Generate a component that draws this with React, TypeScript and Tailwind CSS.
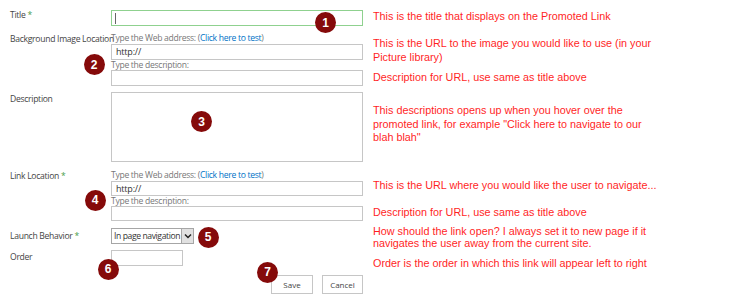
import React from 'react'

const label = "text-[8.6px] text-[#444] leading-[12px] tracking-[-0.3px]"
const hint = "text-[8.6px] text-[#777] tracking-[-0.3px]"
const box = "border border-[#c6c6c6] bg-white"
const note = "text-[10.8px] text-[#ff1f1f]"

function Marker({ n, x, y }: { n: number; x: number; y: number }) {
  // numbered callout dropped on top of the form
  return (
    <div
      className="absolute w-[21px] h-[21px] rounded-full bg-[#850a0a] text-white flex items-center justify-center text-[12px] font-bold"
      style={{ left: x - 10.5, top: y - 10.5, fontFamily: '"Liberation Sans", Arial, sans-serif' }}
    >
      {n}
    </div>
  )
}

function WebAddress() {
  return (
    <div className={`${hint} h-[11px] leading-[11px] whitespace-nowrap`}>
      Type the Web address: (<span className="text-[#0072c6]">Click here to test</span>)
    </div>
  )
}

export default function App() {
  return (
    <div className="relative w-[736px] h-[302px] bg-white overflow-hidden flex" style={{ fontFamily: '"Open Sans", "Noto Sans", sans-serif' }}>
      <div className="w-[373px] pl-[10px] pr-[10px] flex flex-col shrink-0">
        <div className="flex mt-[10px]">
          <div className={`w-[101px] ${label} mt-[-1px]`}>Title <span className="text-[#4a9d4a]">*</span></div>
          <div className="w-[252px] h-[16px] border border-[#8fd18f] flex items-center pl-[3px]">
            <div className="w-px h-[11px] bg-[#666]" />
          </div>
        </div>

        <div className="flex mt-[7px]">
          <div className={`w-[101px] ${label} whitespace-nowrap`}>Background Image Location</div>
          <div className="w-[252px] flex flex-col">
            <WebAddress />
            <div className={`${box} h-[16px] text-[9px] tracking-[-0.2px] text-[#333] leading-[14px] pl-[4px]`}>http://</div>
            <div className={`${hint} h-[10px] leading-[10px]`}>Type the description:</div>
            <div className={`${box} h-[16px]`} />
          </div>
        </div>

        <div className="flex mt-[6px]">
          <div className={`w-[101px] ${label} pt-[1px]`}>Description</div>
          <div className={`w-[252px] h-[70px] ${box}`} />
        </div>

        <div className="flex mt-[8px]">
          <div className={`w-[101px] ${label}`}>Link Location <span className="text-[#4a9d4a]">*</span></div>
          <div className="w-[252px] flex flex-col">
            <WebAddress />
            <div className={`${box} h-[15px] text-[9px] tracking-[-0.2px] text-[#333] leading-[13px] pl-[4px]`}>http://</div>
            <div className={`${hint} h-[10px] leading-[10px]`}>Type the description:</div>
            <div className={`${box} h-[15px]`} />
          </div>
        </div>

        <div className="flex mt-[7px] items-center">
          <div className={`w-[101px] ${label}`}>Launch Behavior <span className="text-[#4a9d4a]">*</span></div>
          <div className="w-[83px] h-[16px] border border-[#a6a6a6] flex items-center">
            <div className="flex-1 text-[8.6px] text-[#333] pl-[2px] leading-[14px] whitespace-nowrap tracking-[-0.4px]">In page navigation</div>
            <div className="w-[12px] h-[14px] bg-[#e1e1e1] border-l border-[#a6a6a6] flex items-center justify-center">
              <svg width="8" height="6" viewBox="0 0 8 6"><path d="M1 1.5 L4 4.5 L7 1.5" fill="none" stroke="#222" strokeWidth="1.5" /></svg>
            </div>
          </div>
        </div>

        <div className="flex mt-[6px]">
          <div className={`w-[101px] ${label} pt-[1px]`}>Order</div>
          <div className={`w-[72px] h-[16px] ${box}`} />
        </div>

        <div className="flex justify-end gap-[9px] mt-[9px]">
          <button className={`w-[42px] h-[19px] ${box} text-[8px] text-[#444]`}>Save</button>
          <button className={`w-[41px] h-[19px] ${box} text-[8px] text-[#444]`}>Cancel</button>
        </div>
      </div>

      <div className={`flex flex-col ${note}`} style={{ fontFamily: '"Liberation Sans", Arial, sans-serif' }}>
        <div className="mt-[10px] leading-[13px]">This is the title that displays on the Promoted Link</div>
        <div className="mt-[13px] leading-[14px]">This is the URL to the image you would like to use (in your<br />Picture library)</div>
        <div className="mt-[7px] leading-[13px]">Description for URL, use same as title above</div>
        <div className="mt-[20px] leading-[13.5px]">This descriptions opens up when you hover over the<br />promoted link, for example "Click here to navigate to our<br />blah blah"</div>
        <div className="mt-[34.5px] leading-[13px]">This is the URL where you would like the user to navigate...</div>
        <div className="mt-[14px] leading-[13px]">Description for URL, use same as title above</div>
        <div className="mt-[6px] leading-[12px]">How should the link open? I always set it to new page if it<br />navigates the user away from the current site.</div>
        <div className="mt-[8px] leading-[13px]">Order is the order in which this link will appear left to right</div>
      </div>

      <Marker n={1} x={325.5} y={22.5} />
      <Marker n={2} x={94} y={64.5} />
      <Marker n={3} x={201.5} y={121.5} />
      <Marker n={4} x={95} y={200} />
      <Marker n={5} x={208} y={237} />
      <Marker n={6} x={108} y={269} />
      <Marker n={7} x={267.5} y={272} />
    </div>
  )
}
